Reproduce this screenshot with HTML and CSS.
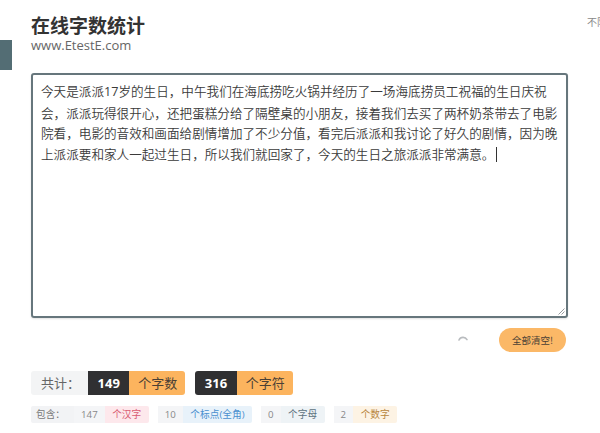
FILE: index.html
```html
<!DOCTYPE html>
<html lang="zh-CN">
<head>
<meta charset="utf-8">
<title>在线字数统计</title>
<link rel="stylesheet" href="styles.css">
</head>
<body>
<div class="page">
  <header class="header">
    <div class="tab"></div>
    <div class="brand">
      <h1 class="title">在线字数统计</h1>
      <div class="site">www.EtestE.com</div>
    </div>
    <div class="note">不限字数</div>
  </header>

  <div class="editor">
    <div class="line">今天是派派<span class="digits">17</span>岁的生日，中午我们在海底捞吃火锅并经历了一场海底捞员工祝福的生日庆祝</div>
    <div class="line">会，派派玩得很开心，还把蛋糕分给了隔壁桌的小朋友，接着我们去买了两杯奶茶带去了电影</div>
    <div class="line">院看，电影的音效和画面给剧情增加了不少分值，看完后派派和我讨论了好久的剧情，因为晚</div>
    <div class="line">上派派要和家人一起过生日，所以我们就回家了，今天的生日之旅派派非常满意。<span class="caret"></span></div>
    <svg class="grip" width="8" height="8" viewBox="0 0 8 8"><path d="M7.5 1.5 L1.5 7.5 M7.5 4.5 L4.5 7.5" stroke="#8a8f92" stroke-width="0.9" fill="none"/></svg>
  </div>

  <div class="controls">
    <svg class="spinner" width="12" height="12" viewBox="0 0 12 12"><path d="M2 5 A4.5 4.5 0 0 1 10 4.6" stroke="#b9bcbf" stroke-width="1.6" fill="none" stroke-linecap="round"/></svg>
    <button class="clear">全部清空!</button>
  </div>

  <div class="totals">
    <span class="t-label">共计：</span>
    <span class="t-group"><span class="t-num">149</span><span class="t-unit">个字数</span></span>
    <span class="t-group"><span class="t-num">316</span><span class="t-unit">个字符</span></span>
  </div>

  <div class="details">
    <span class="d-label">包含：</span>
    <span class="d-group"><span class="d-num">147</span><span class="d-unit u-han">个汉字</span></span>
    <span class="d-group"><span class="d-num">10</span><span class="d-unit u-punct">个标点(全角)</span></span>
    <span class="d-group"><span class="d-num">0</span><span class="d-unit u-letter">个字母</span></span>
    <span class="d-group"><span class="d-num">2</span><span class="d-unit u-digit">个数字</span></span>
  </div>
</div>
</body>
</html>
```

FILE: styles.css
```css
html, body {
  margin: 0;
  padding: 0;
  background: #ffffff;
}
body {
  overflow: hidden;
  font-family: "Open Sans", "Noto Sans CJK SC", sans-serif;
  color: #333;
}
.page {
  width: 600px;
}
.header {
  display: flex;
  align-items: flex-start;
}
.tab {
  width: 12px;
  height: 30px;
  margin-top: 40px;
  background: #536d74;
  flex: none;
}
.brand {
  margin-left: 19px;
  margin-top: 13px;
}
.title {
  margin: 0;
  font-family: "Noto Sans CJK SC", sans-serif;
  font-size: 19px;
  line-height: 24px;
  font-weight: 700;
  color: #333;
}
.site {
  font-family: "Open Sans", sans-serif;
  font-size: 13px;
  line-height: 16px;
  color: #666;
}
.note {
  margin-left: auto;
  margin-right: -27px;
  margin-top: 16px;
  font-family: "Noto Sans CJK SC", sans-serif;
  font-size: 10px;
  line-height: 12px;
  color: #888;
  white-space: nowrap;
}
.editor {
  position: relative;
  box-sizing: border-box;
  margin: 3px 0 0 31px;
  width: 537px;
  height: 245px;
  border: 2px solid #66767c;
  border-radius: 3px;
  padding: 6px 8px;
  box-shadow: 0 1px 2px rgba(0, 0, 0, 0.12);
  font-family: "Noto Sans CJK SC", sans-serif;
  font-size: 12.6px;
  font-weight: 350;
  line-height: 20.6px;
  color: #3a3a3a;
}
.line {
  white-space: nowrap;
}
.digits {
  font-family: "Open Sans", sans-serif;
  font-weight: 400;
}
.caret {
  display: inline-block;
  width: 1px;
  height: 15px;
  margin-left: 2px;
  background: #333;
  vertical-align: -3px;
}
.grip {
  position: absolute;
  right: 1px;
  bottom: 1px;
}
.controls {
  margin: 10px 0 0 31px;
  width: 537px;
  height: 24px;
  display: flex;
  justify-content: flex-end;
  align-items: center;
}
.spinner {
  margin-right: 30px;
  margin-top: 1px;
}
.clear {
  width: 67px;
  height: 24px;
  margin: 0 2px 0 0;
  padding: 0;
  border: none;
  border-radius: 12px;
  background: #fbb867;
  font-family: "Noto Sans CJK SC", sans-serif;
  font-size: 9.5px;
  color: #4a4035;
}
.totals {
  margin: 19px 0 0 31px;
  display: flex;
  height: 24px;
  font-size: 13px;
  line-height: 24px;
}
.t-label {
  padding: 0 8px 0 10px;
  background: #f3f4f5;
  color: #666;
  border-radius: 3px 0 0 3px;
}
.t-group {
  display: flex;
}
.t-group + .t-group {
  margin-left: 10px;
}
.t-num {
  padding: 0 9.5px;
  background: #303032;
  color: #fff;
  font-weight: 700;
}
.t-group + .t-group .t-num {
  border-radius: 3px 0 0 3px;
}
.t-unit {
  padding: 0 8px 0 9px;
  background: #fcb45e;
  color: #4a4035;
  border-radius: 0 3px 3px 0;
}
.details {
  margin: 11px 0 0 31px;
  display: flex;
  height: 17px;
  font-size: 9.7px;
  line-height: 17px;
}
.d-label {
  padding: 0 9px 0 5px;
  background: #f2f3f5;
  color: #777;
  border-radius: 2px 0 0 2px;
}
.d-group {
  display: flex;
}
.d-group + .d-group {
  margin-left: 9px;
}
.d-num {
  padding: 0 7px;
  background: #f4f5f7;
  color: #888;
}
.d-unit {
  padding: 0 7.5px;
  border-radius: 0 2px 2px 0;
}
.u-han {
  background: #fde8ec;
  color: #d95a72;
}
.u-punct {
  background: #e8f2fa;
  color: #4a8fcf;
}
.u-letter {
  background: #eef3f6;
  color: #5d7280;
}
.u-digit {
  background: #fdf3e4;
  color: #b8863f;
}
```
